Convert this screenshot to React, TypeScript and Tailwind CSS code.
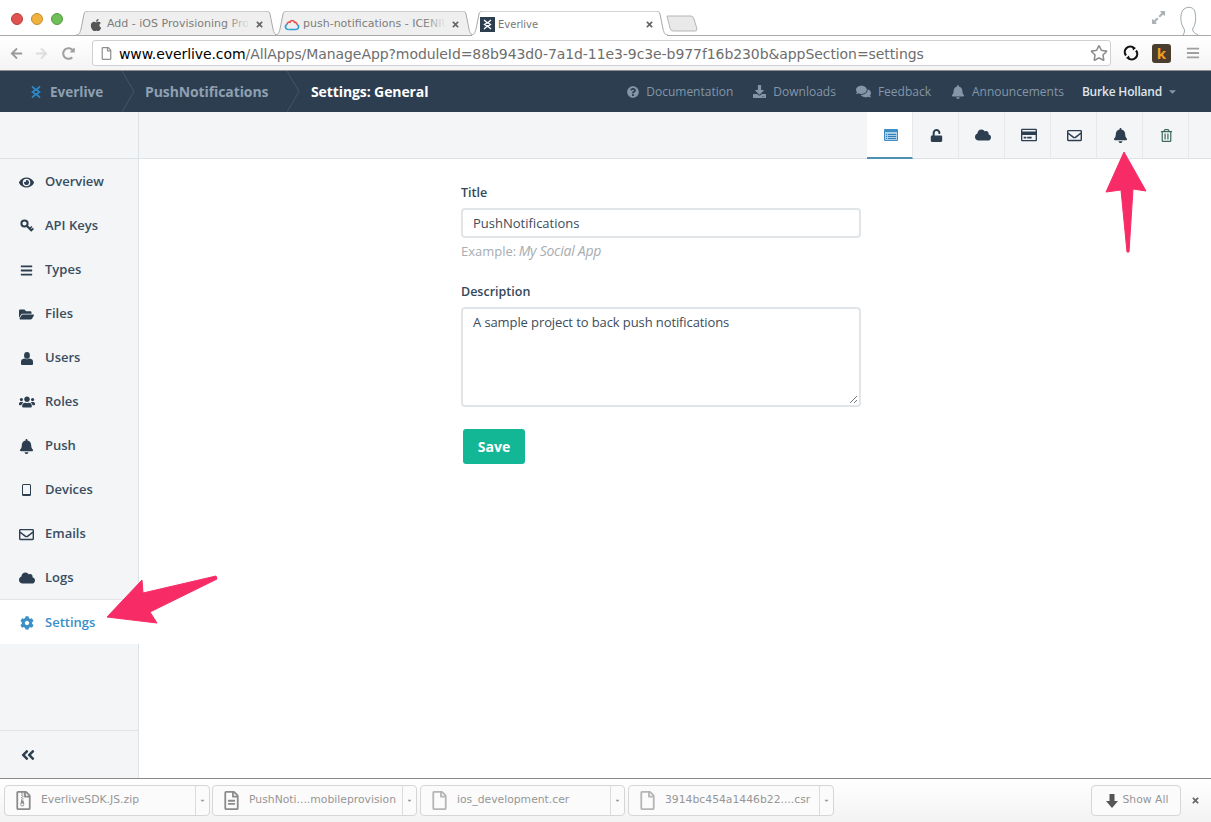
import type { ReactNode } from "react";
import {
  FaEye,
  FaBars,
  FaFolderOpen,
  FaUsers,
  FaBell,
  FaRegEnvelope,
  FaCloud,
  FaCog,
  FaAngleDoubleLeft,
  FaUnlock,
  FaRegCreditCard,
  FaRegTrashAlt,
  FaQuestionCircle,
  FaDownload,
  FaComments,
  FaApple,
  FaArrowLeft,
  FaArrowRight,
  FaRedoAlt,
  FaRegStar,
  FaRegFile,
  FaCaretDown,
  FaTimes,
  FaRegFileArchive,
  FaRegFileAlt,
  FaExpandAlt,
} from "react-icons/fa";

const KeyIcon = () => (
  <svg width="14" height="14" viewBox="0 0 14 14">
    <circle cx="4.5" cy="4.5" r="3.1" fill="none" stroke="currentColor" strokeWidth="2" />
    <path d="M6.5 6.5 L12 12" stroke="currentColor" strokeWidth="2.2" />
    <path d="M9.5 9.5 L12 7.5 M11 11 L13.5 9.5" stroke="currentColor" strokeWidth="1.6" />
  </svg>
);

const UserIcon = () => (
  <svg width="12" height="13" viewBox="0 0 12 13">
    <ellipse cx="6" cy="3.4" rx="2.9" ry="3.4" fill="currentColor" />
    <path d="M1 13 Q0 13 0 12 L0 9.5 Q0 7 3.4 6.4 Q6 8 8.6 6.4 Q12 7 12 9.5 L12 12 Q12 13 11 13 Z" fill="currentColor" />
  </svg>
);

const TabletIcon = () => (
  <span className="block w-[9px] h-[12px] rounded-[1.5px] border-[1.5px] border-current border-b-[2.5px]" />
);

const sideItems = [
  { label: "Overview", icon: <FaEye size={15} /> },
  { label: "API Keys", icon: <KeyIcon /> },
  { label: "Types", icon: <FaBars size={13} /> },
  { label: "Files", icon: <FaFolderOpen size={15} /> },
  { label: "Users", icon: <UserIcon /> },
  { label: "Roles", icon: <FaUsers size={16} /> },
  { label: "Push", icon: <FaBell size={15} /> },
  { label: "Devices", icon: <TabletIcon /> },
  { label: "Emails", icon: <FaRegEnvelope size={15} /> },
  { label: "Logs", icon: <FaCloud size={16} /> },
];

const toolIcons = [
  <svg key="general" width="14" height="12" viewBox="0 0 14 12" className="text-[#3d8ec4]">
    <rect width="14" height="12" rx="1" fill="currentColor" />
    <rect x="1" y="3" width="12" height="8" fill="#a9cfe8" />
    <path d="M2 5h1v1H2zM4 5h8v1H4zM2 7h1v1H2zM4 7h8v1H4zM2 9h1v1H2zM4 9h8v1H4z" fill="#2f7fb6" />
  </svg>,
  <FaUnlock key="lock" size={13} />,
  <FaCloud key="cloud" size={16} />,
  <FaRegCreditCard key="card" size={16} />,
  <FaRegEnvelope key="mail" size={15} />,
  <FaBell key="bell" size={15} />,
  <FaRegTrashAlt key="trash" size={13} className="text-[#3f6a5c]" />,
];

const Tab = ({
  width,
  title,
  icon,
  inset,
  active,
}: {
  width: number;
  title: string;
  icon: ReactNode;
  inset: number;
  active?: boolean;
}) => (
  <div className="relative h-[24px] -mr-[3px] flex items-center" style={{ width }}>
    <svg className="absolute inset-0" width={width} height={24} viewBox={`0 0 ${width} 24`}>
      <path
        d={`M0 24 C3 24 4 22 5 18 L8 3 C8.5 1 10 0 12 0 L${width - 12} 0 C${width - 10} 0 ${width - 8.5} 1 ${width - 8} 3 L${width - 5} 18 C${width - 4} 22 ${width - 3} 24 ${width} 24`}
        fill={active ? "#ffffff" : "#efefef"}
        stroke="#a9a9a9"
        strokeWidth="1"
      />
    </svg>
    {active && <div className="absolute left-[1px] right-[1px] -bottom-px h-px bg-white" />}
    <div className="relative flex items-center w-full pr-[14px] pt-[3px] min-w-0" style={{ paddingLeft: inset }}>
      <span className="w-[16px] h-[16px] shrink-0 flex items-center justify-center">{icon}</span>
      <span
        className={`relative ml-[3px] whitespace-nowrap overflow-hidden flex-1 ${
          active ? "text-[10px] text-[#777777]" : "text-[11px] text-[#7d7d7d]"
        }`}
      >
        {title}
        {!active && <span className="absolute right-0 top-0 bottom-0 w-[24px] bg-gradient-to-r from-transparent to-[#efefef]" />}
      </span>
      <FaTimes size={9} className="ml-[4px] shrink-0 text-[#666666]" />
    </div>
  </div>
);

const Download = ({
  width,
  name,
  icon,
  gap,
}: {
  width: number;
  name: string;
  icon: ReactNode;
  gap: number;
}) => (
  <div
    className="h-[31px] flex items-center rounded-[4px] border border-[#d6d6d6] bg-[#fbfbfb]"
    style={{ width, marginRight: gap }}
  >
    <span className="w-[36px] shrink-0 flex justify-center text-[#8a8a8a]">{icon}</span>
    <span className="flex-1 min-w-0 text-[10.8px] text-[#969696] whitespace-nowrap overflow-hidden">{name}</span>
    <span className="w-[14px] h-full shrink-0 border-l border-[#dcdcdc] flex items-center justify-center">
      <FaCaretDown size={7} className="text-[#9a9a9a]" />
    </span>
  </div>
);

const HeaderLink = ({ icon, label }: { icon: ReactNode; label: string }) => (
  <div className="flex items-center gap-[7px] text-[#8496a8]">
    {icon}
    <span className="text-[12px]">{label}</span>
  </div>
);

const Chevron = () => (
  <svg width="14" height="41" viewBox="0 0 14 41" className="shrink-0">
    <path d="M0 0 L12 20.5 L0 41" fill="none" stroke="#44566a" strokeWidth="1" />
  </svg>
);

const App = () => {
  return (
    <div className="relative w-full h-[822px] overflow-hidden flex flex-col bg-white font-['Open_Sans',sans-serif]">
      {/* browser chrome */}
      <div className="h-[36px] shrink-0 flex items-end border-b border-[#a9a9a9] bg-white pl-[76px] font-['DejaVu_Sans',sans-serif] relative">
        <div className="absolute left-[11px] top-[13px] flex gap-[8px]">
          <span className="w-[12px] h-[12px] rounded-full bg-[#e0524f] border border-[#b8403d]" />
          <span className="w-[12px] h-[12px] rounded-full bg-[#f0b13f] border border-[#c48f2f]" />
          <span className="w-[12px] h-[12px] rounded-full bg-[#6fbf58] border border-[#559a43]" />
        </div>
        <Tab width={202} inset={12} title="Add - iOS Provisioning Pro" icon={<FaApple size={14} className="text-[#555555]" />} />
        <Tab width={199} inset={9} title="push-notifications - ICENIUM" icon={
          <svg width="16" height="12" viewBox="0 0 16 12">
            <path d="M4.5 10.5 C1 10.5 0.5 6.5 3 5.5" fill="none" stroke="#2a9fd6" strokeWidth="1.6" />
            <path d="M4.5 10.5 H11.5 C15 10.5 15.5 6.5 13 5.5" fill="none" stroke="#2a9fd6" strokeWidth="1.6" />
            <path d="M3 5.5 C3.5 3 5.5 3 6 3.2 C7 1 9.5 1 10.5 3.2 C11 3 12.5 3.5 13 5.5" fill="none" stroke="#e0524f" strokeWidth="1.6" />
          </svg>
        } />
        <Tab width={197} inset={8} title="Everlive" active icon={
          <span className="w-[15px] h-[15px] bg-[#2c3e50] flex items-center justify-center">
            <svg width="11" height="11" viewBox="0 0 11 11">
              <path d="M2 1 L5.5 4 L9 1 M2 10 L5.5 7 L9 10 M5.5 3.5 L8.5 5.5 L5.5 7.5 L2.5 5.5 Z" fill="none" stroke="#ffffff" strokeWidth="1.3" />
            </svg>
          </span>
        } />
        <svg width="32" height="17" viewBox="0 0 32 17" className="ml-[1px] mb-[3px]">
          <path d="M1 1 H25 Q27 1 28 4 L31 14 Q31 16 29 16 H7 Q5 16 4 13 Z" fill="#e9e9e9" stroke="#b5b5b5" />
        </svg>
        <FaExpandAlt size={15} className="absolute left-[1151px] top-[10px] text-[#aab0b3]" />
        <svg width="24" height="30" viewBox="0 0 24 30" className="absolute left-[1176px] top-[6px]">
          <path d="M7 29 C9 26 9 24 7 21 C4 16 4 6 8 3 C12 0 18 1 19 6 C20 12 20 18 17 22 C16 25 18 27 22 29" fill="none" stroke="#9aa7ad" strokeWidth="1" />
        </svg>
      </div>
      <div className="h-[35px] shrink-0 flex items-center bg-gradient-to-b from-white to-[#f4f4f4] border-b border-[#8f8f8f]">
        <FaArrowLeft size={13} className="ml-[10px] text-[#9a9a9a]" />
        <FaArrowRight size={13} className="ml-[12px] text-[#dddddd]" />
        <FaRedoAlt size={13} className="ml-[14px] text-[#a0a0a0]" />
        <div className="ml-[17px] w-[1019px] h-[26px] rounded-[3px] border border-[#d0d0d0] bg-white flex items-center pl-[7px] pr-[3px] font-['DejaVu_Sans',sans-serif]">
          <FaRegFile size={13} className="text-[#8f8f8f] shrink-0" />
          <span className="ml-[6px] pt-[2px] text-[14px] tracking-[-0.08px] whitespace-nowrap text-[#6e6e6e]">
            <span className="text-black">www.everlive.com</span>/AllApps/ManageApp?moduleId=88b943d0-7a1d-11e3-9c3e-b977f16b230b&amp;appSection=settings
          </span>
          <FaRegStar size={18} className="ml-auto mr-[-1px] text-[#8c8c8c]" />
        </div>
        <svg width="16" height="16" viewBox="0 0 16 16" className="ml-[12px]">
          <path d="M3 10.5 A5.5 5.5 0 0 1 11 3" fill="none" stroke="#111111" strokeWidth="2.2" />
          <path d="M13 5.5 A5.5 5.5 0 0 1 5 13" fill="none" stroke="#111111" strokeWidth="2.2" />
          <path d="M9 1 L13 3 L10 5.5 Z M7 15 L3 13 L6 10.5 Z" fill="#111111" />
        </svg>
        <span className="ml-[13px] w-[19px] h-[19px] rounded-[3px] bg-[#4a3d2e] flex items-center justify-center text-[15px] font-bold leading-none text-[#f0a020]">
          k
        </span>
        <FaBars size={14} className="ml-[15px] text-[#a0a0a0]" />
      </div>

      {/* app header */}
      <header className="h-[41px] shrink-0 flex items-center bg-[#2c3e50] pl-[29px] pr-[33px]">
        <svg width="14" height="14" viewBox="0 0 14 14" className="shrink-0">
          <path d="M3 1.5 L7 5 L11 1.5 M3 12.5 L7 9 L11 12.5 M7 4.5 L10.5 7 L7 9.5 L3.5 7 Z" fill="none" stroke="#2f86c4" strokeWidth="1.7" />
        </svg>
        <span className="ml-[7px] w-[72px] pt-px text-[13.5px] font-bold text-[#8fa0b2]">Everlive</span>
        <Chevron />
        <span className="ml-[9px] w-[142px] text-[14px] font-bold tracking-[-0.1px] text-[#8fa0b2]">PushNotifications</span>
        <Chevron />
        <span className="ml-[10px] text-[14px] font-bold tracking-[-0.1px] text-white">Settings: General</span>
        <div className="ml-auto flex items-center gap-[20px]">
          <HeaderLink icon={<FaQuestionCircle size={12} />} label="Documentation" />
          <HeaderLink icon={<FaDownload size={13} />} label="Downloads" />
          <HeaderLink icon={<FaComments size={15} />} label="Feedback" />
          <HeaderLink icon={<FaBell size={14} />} label="Announcements" />
          <div className="-ml-[2px] flex items-center gap-[5px] text-[#dfe5ea]">
            <span className="text-[12px] font-semibold tracking-[-0.2px]">Burke Holland</span>
            <FaCaretDown size={11} className="text-[#8496a8]" />
          </div>
        </div>
      </header>

      {/* sub toolbar */}
      <div className="h-[47px] shrink-0 flex bg-[#f3f5f7] border-b border-[#dde2e6]">
        <div className="w-[139px] shrink-0 border-r border-[#dde2e6]" />
        <div className="ml-[728px] flex text-[#2c3e50]">
          {toolIcons.map((icon, i) => (
            <div
              key={i}
              className={`w-[46px] pl-[2px] flex items-center justify-center border-r ${
                i === 0
                  ? "bg-white border-b-2 border-b-[#4d90b0] border-r-[#e6e9ec] -mb-px"
                  : "border-[#e6e9ec]"
              }`}
            >
              {icon}
            </div>
          ))}
        </div>
      </div>

      {/* body */}
      <div className="flex-1 min-h-0 flex">
        <aside className="w-[139px] shrink-0 flex flex-col bg-[#f3f5f7] border-r border-[#dde2e6]">
          {sideItems.map((item) => (
            <div key={item.label} className="h-[44px] shrink-0 pt-[2px] flex items-center text-[#2c3e50]">
              <span className="w-[45px] shrink-0 flex justify-center pl-[9px] pr-[1px]">{item.icon}</span>
              <span className="text-[13px] font-semibold text-[#3a4d5f]">{item.label}</span>
            </div>
          ))}
          <div className="h-[45px] shrink-0 pt-[2px] flex items-center bg-white border-t border-[#e1e5e8] -mr-px text-[#3a8fc7]">
            <span className="w-[45px] shrink-0 flex justify-center pl-[9px] pr-[1px]">
              <FaCog size={14} />
            </span>
            <span className="text-[13px] font-semibold">Settings</span>
          </div>
          <div className="mt-auto h-[48px] shrink-0 flex items-center border-t border-[#e1e5e8] pl-[20px] text-[#2c3e50]">
            <FaAngleDoubleLeft size={16} />
          </div>
        </aside>

        <main className="flex-1 min-w-0 pl-[322px] pt-[24px] bg-white">
          <div className="w-[400px] flex flex-col">
            <label className="h-[18px] leading-[20px] text-[12.5px] font-semibold text-[#33475a]">Title</label>
            <div className="mt-[7px] h-[30px] pt-[1px] flex items-center rounded-[4px] border-2 border-[#e1e5e8] px-[10px] text-[13px] text-[#3c4c5c]">
              PushNotifications
            </div>
            <p className="mt-[3px] h-[20px] leading-[20px] text-[13px] text-[#a8adb1]">
              Example: <em className="-ml-px text-[14px] tracking-[-0.25px]">My Social App</em>
            </p>
            <label className="mt-[21px] h-[18px] leading-[20px] text-[12.5px] font-semibold text-[#33475a]">Description</label>
            <div className="relative mt-[7px] h-[100px] rounded-[4px] border-2 border-[#e1e5e8] px-[10px] pt-[4px] text-[13px] leading-[18px] tracking-[-0.1px] text-[#3c4c5c]">
              A sample project to back push notifications
              <svg width="9" height="9" viewBox="0 0 9 9" className="absolute right-[1px] bottom-[1px]">
                <path d="M1 8 L8 1 M5 8 L8 5" stroke="#777777" strokeWidth="1" />
              </svg>
            </div>
            <button className="mt-[22px] ml-[2px] w-[62px] h-[35px] rounded-[3px] bg-[#14b795] text-[14px] font-bold text-white">
              Save
            </button>
          </div>
        </main>
      </div>

      {/* downloads bar */}
      <div className="h-[44px] shrink-0 flex items-center bg-gradient-to-b from-white to-[#f3f3f3] border-t border-[#8a8a8a] pl-[4px] font-['DejaVu_Sans',sans-serif]">
        <Download width={206} gap={2} name="EverliveSDK.JS.zip" icon={<FaRegFileArchive size={19} />} />
        <Download width={205} gap={3} name="PushNoti....mobileprovision" icon={<FaRegFileAlt size={19} />} />
        <Download width={205} gap={3} name="ios_development.cer" icon={<FaRegFile size={19} className="text-[#b5b5b5]" />} />
        <Download width={206} gap={0} name="3914bc454a1446b22....csr" icon={<FaRegFile size={19} className="text-[#b5b5b5]" />} />
        <div className="ml-auto h-[31px] w-[90px] flex items-center justify-center gap-[5px] pl-[2px] rounded-[4px] border border-[#d6d6d6] bg-[#fbfbfb] text-[10.8px] text-[#969696]">
          <svg width="12" height="14" viewBox="0 0 12 14" className="shrink-0">
            <path d="M3.5 0 H8.5 V7 H12 L6 14 L0 7 H3.5 Z" fill="#555555" />
          </svg>
          Show All
        </div>
        <FaTimes size={9} className="ml-[10px] mr-[11px] text-[#666666]" />
      </div>

      {/* annotation arrows drawn over the page */}
      <svg className="absolute inset-0 pointer-events-none" width="1211" height="822" viewBox="0 0 1211 822">
        <path
          d="M1124 152 L1146 191 L1133 189 L1129 252 L1127 252 L1121 190 L1106 192 Z"
          fill="#f72c66"
          stroke="#f72c66"
          strokeLinejoin="round"
        />
        <path
          d="M107 617 L142 580 L143 593 L216 576 L217 579 L150 612 L157 623 Z"
          fill="#f72c66"
          stroke="#f72c66"
          strokeLinejoin="round"
        />
      </svg>
    </div>
  );
};

export default App;
